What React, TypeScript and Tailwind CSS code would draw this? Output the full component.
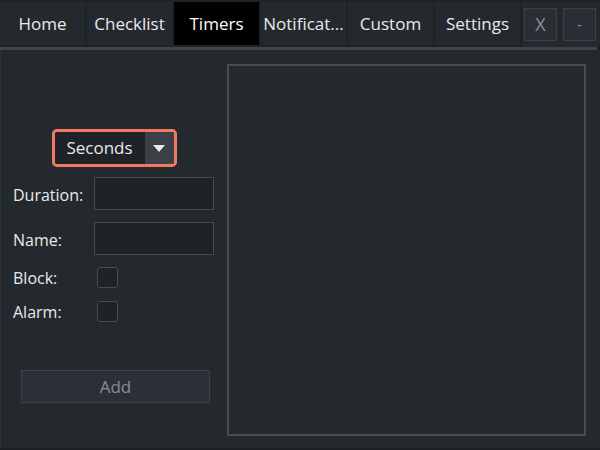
import React from 'react';

const tabs = ['Home', 'Checklist', 'Timers', 'Notificat...', 'Custom', 'Settings'];

const App: React.FC = () => {
  return (
    <div
      className="w-[600px] h-[450px] bg-[#1c2024] text-[#e8eaec] overflow-hidden flex flex-col"
      style={{ fontFamily: '"Open Sans", "Noto Sans", sans-serif' }}
    >
      {/* Tab bar */}
      <div className="h-[47px] pt-[2px] flex items-start bg-[#1f2327]">
        {tabs.map((t) => (
          <div
            key={t}
            className={`w-[85px] h-[43px] mr-[2px] pt-[1px] flex items-center justify-center text-[17px] ${
              t === 'Timers' ? 'bg-black text-white' : 'bg-[#24292e]'
            }`}
          >
            {t}
          </div>
        ))}
        <div className="h-[45px] flex items-center gap-[6px] pl-[2px] pr-[3px] bg-[#24292e] flex-1">
          <div className="w-[33px] h-[33px] bg-[#2a2f35] border border-[#3a4047] flex items-center justify-center text-[18px] text-[#8a9098]">
            X
          </div>
          <div className="w-[33px] h-[33px] bg-[#2a2f35] border border-[#3a4047] flex items-center justify-center text-[14px] text-[#8a9098]">
            -
          </div>
        </div>
      </div>
      <div className="h-[3px] mr-[3px] bg-[#3e454d]" />

      {/* Content */}
      <div className="flex-1 flex bg-[#24292e] border-l border-[#2e3339] mb-[2px]">
        <div className="w-[226px] flex flex-col">
          <div className="flex justify-center pt-[79px]">
            <div className="w-[125px] h-[38px] rounded-[5px] border-[3px] border-[#f07a62] flex overflow-hidden">
              <div className="flex-1 bg-[#1f2327] flex items-center justify-center text-[17px]">Seconds</div>
              <div className="w-[29px] bg-[#3b4047] flex items-center justify-center">
                <svg width="12" height="7" viewBox="0 0 12 7">
                  <path d="M0 0 L12 0 L6 7 Z" fill="#e8eaec" />
                </svg>
              </div>
            </div>
          </div>
          <div className="pl-[12px] pr-[13px] mt-[10px] flex flex-col">
            <div className="flex items-center justify-between h-[33px]">
              <span className="text-[16px] pt-[2px]">Duration:</span>
              <div className="w-[120px] h-[33px] bg-[#1f2327] border border-[#464c54]" />
            </div>
            <div className="flex items-center justify-between h-[33px] mt-[12px]">
              <span className="text-[16px] pt-[2px]">Name:</span>
              <div className="w-[120px] h-[33px] bg-[#1f2327] border border-[#464c54]" />
            </div>
            <div className="flex items-center h-[22px] mt-[11px]">
              <span className="text-[16px] w-[84px] pt-[2px]">Block:</span>
              <div className="w-[21px] h-[21px] rounded-[3px] bg-[#1f2327] border border-[#474d55]" />
            </div>
            <div className="flex items-center h-[22px] mt-[12px]">
              <span className="text-[16px] w-[84px] pt-[2px]">Alarm:</span>
              <div className="w-[21px] h-[21px] rounded-[3px] bg-[#1f2327] border border-[#474d55]" />
            </div>
          </div>
          <div className="pl-[20px] mt-[48px]">
            <div className="w-[189px] h-[33px] bg-[#2b3038] border border-[#3c424a] flex items-center justify-center text-[17px] text-[#878d95]">
              Add
            </div>
          </div>
        </div>
        <div className="flex-1 pt-[14px] pr-[14px] pb-[12px]">
          <div className="w-full h-full border-2 border-[#464c54]" />
        </div>
      </div>
    </div>
  );
};

export default App;
